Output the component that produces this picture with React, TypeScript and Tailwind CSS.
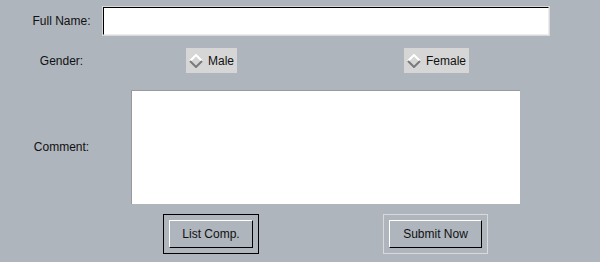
import React, { useState } from "react";

const font = { fontFamily: '"Liberation Sans", Arial, sans-serif' };

const Diamond: React.FC = () => (
  <svg width="14" height="14" viewBox="0 0 14 14" className="shrink-0">
    <polygon points="7,1 13,7 7,13 1,7" fill="#d6d6d6" />
    <polyline points="1,7 7,1 13,7" fill="none" stroke="#ffffff" strokeWidth="2" />
    <polyline points="1,7 7,13 13,7" fill="none" stroke="#7a7a7a" strokeWidth="2" />
  </svg>
);

interface RadioProps {
  label: string;
  className?: string;
}

const Radio: React.FC<RadioProps> = ({ label, className }) => (
  <div
    className={
      "flex items-center h-[25px] pl-[3px] pr-[3px] gap-[5px] bg-[#d6d6d6] text-[12px] text-[#111] " +
      (className ?? "")
    }
  >
    <Diamond />
    <span>{label}</span>
  </div>
);

export default function App() {
  const [name, setName] = useState("");
  const [comment, setComment] = useState("");

  return (
    <div
      className="w-[600px] h-[262px] bg-[#aeb5bd] overflow-hidden text-[12px] text-[#111]"
      style={font}
    >
      {/* Full name */}
      <div className="flex items-center pt-[6px]">
        <label className="w-[81px] ml-[21px] text-center">Full Name:</label>
        <div className="w-[448px] h-[30px] border border-[#d9d9d9]">
          <input
            value={name}
            onChange={(e) => setName(e.target.value)}
            className="w-full h-full bg-white border-t border-l border-black border-r border-b border-r-[#ececec] border-b-[#ececec] outline-none px-1"
          />
        </div>
      </div>

      {/* Gender */}
      <div className="flex items-center mt-[12px]">
        <label className="w-[81px] ml-[21px] text-center">Gender:</label>
        <Radio label="Male" className="ml-[84px]" />
        <Radio label="Female" className="ml-[167px]" />
      </div>

      {/* Comment */}
      <div className="flex items-center mt-[17px]">
        <label className="w-[81px] ml-[21px] text-center">Comment:</label>
        <textarea
          value={comment}
          onChange={(e) => setComment(e.target.value)}
          className="ml-[29px] w-[389px] h-[114px] bg-white border-t border-l border-[#9a9a9a] outline-none resize-none"
        />
      </div>

      {/* Buttons */}
      <div className="flex mt-[10px] pl-[163px]">
        <div className="border border-black p-[5px]">
          <button className="w-[84px] h-[28px] border-t border-l border-white border-r border-b border-r-black border-b-black bg-[#aeb5bd] text-[12px] text-[#111]">
            List Comp.
          </button>
        </div>
        <div className="ml-[124px] border border-[#d9d9d9] p-[5px]">
          <button className="w-[93px] h-[28px] border-t border-l border-white border-r border-b border-r-black border-b-black bg-[#aeb5bd] text-[12px] text-[#111]">
            Submit Now
          </button>
        </div>
      </div>
    </div>
  );
}
